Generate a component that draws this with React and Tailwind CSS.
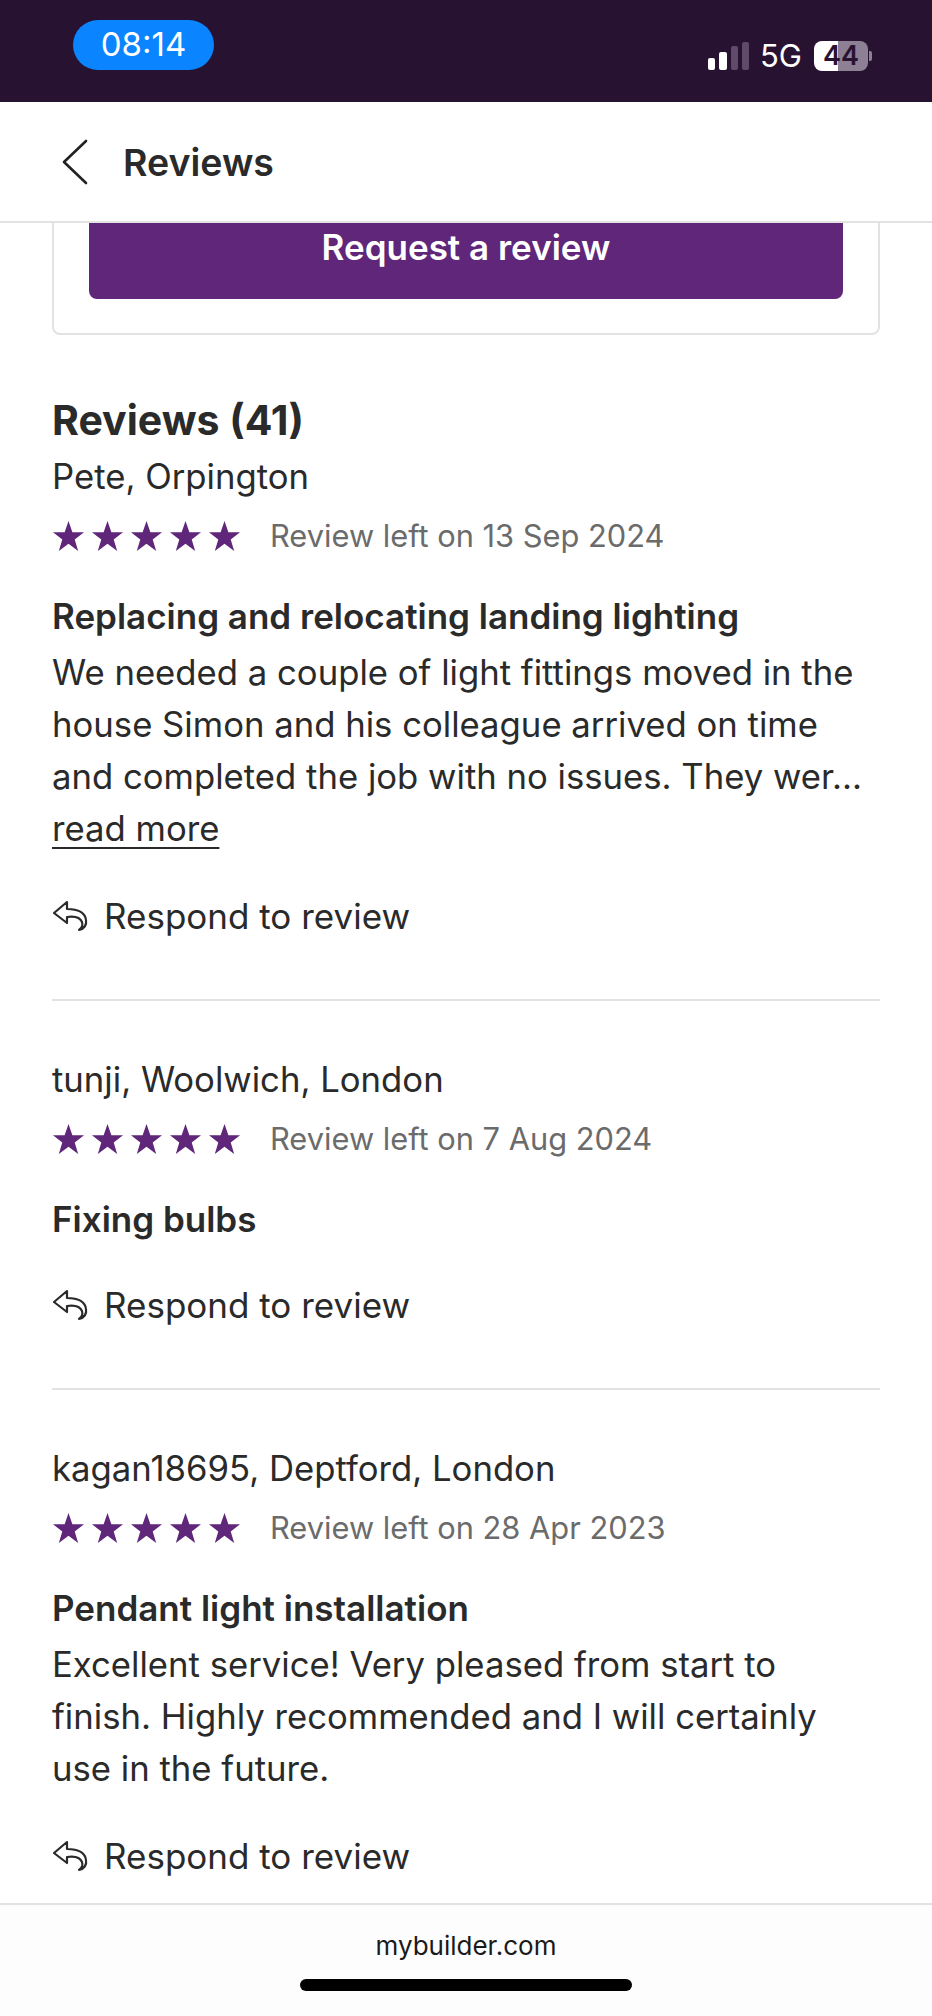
import React from 'react';

const reviews = [
  {
    name: 'Pete, Orpington',
    date: '13 Sep 2024',
    title: 'Replacing and relocating landing lighting',
    lines: [
      'We needed a couple of light fittings moved in the',
      'house Simon and his colleague arrived on time',
      'and completed the job with no issues. They wer...',
    ],
    more: true,
  },
  { name: 'tunji, Woolwich, London', date: '7 Aug 2024', title: 'Fixing bulbs', lines: [] },
  {
    name: 'kagan18695, Deptford, London',
    date: '28 Apr 2023',
    title: 'Pendant light installation',
    lines: [
      'Excellent service! Very pleased from start to',
      'finish. Highly recommended and I will certainly',
      'use in the future.',
    ],
  },
];

const Star = () => (
  <svg width="33" height="32" viewBox="0 0 34 33" className="shrink-0">
    <polygon points="17,1 21,12.6 33,12.6 23.4,20 27,32 17,24.6 7,32 10.6,20 1,12.6 13,12.6" fill="#5f2679" />
  </svg>
);

const ReplyIcon = () => (
  <svg width="36" height="32" viewBox="0 0 36 32" fill="none" stroke="#2a2a2a" strokeWidth="2.2" strokeLinejoin="round" strokeLinecap="round" className="shrink-0">
    <path d="M15 2 L2 13 L15 23 V17 C22 16 28 17 30 22 C31 25 30 28 27 30 C32 29 35 25 34 20 C33 12 25 9 15 9 Z" />
  </svg>
);

const Review = ({ review, last }) => (
  <div className={last ? '' : 'border-b-2 border-[#e2e2e2] pb-[57px] mb-[52px]'}>
    <p className="leading-[52px]">{review.name}</p>
    <div className="mt-[12px] flex h-[44px] items-center">
      <div className="flex gap-[6px]">
        <Star />
        <Star />
        <Star />
        <Star />
        <Star />
      </div>
      <span className="ml-[29px] text-[30.8px] text-[#6b6b6b]">Review left on {review.date}</span>
    </div>
    <p className="mt-[32px] text-[35px] font-semibold leading-[52px]">{review.title}</p>
    {review.lines.length > 0 && (
      <div className="mt-[4px]">
        {review.lines.map((line) => (
          <p key={line} className="leading-[52px] whitespace-nowrap">{line}</p>
        ))}
      </div>
    )}
    {review.more && <a className="block leading-[52px] underline underline-offset-[6px] decoration-2">read more</a>}
    <div className={`${review.lines.length > 0 ? 'mt-[36px]' : 'mt-[34px]'} flex h-[52px] items-center gap-[16px]`}>
      <ReplyIcon />
      <span className="text-[35px]">Respond to review</span>
    </div>
  </div>
);

export default function App() {
  return (
    <div className="flex h-[2016px] w-[932px] flex-col overflow-hidden bg-white font-['Inter',sans-serif] text-[34.7px] text-[#2a2a2a]">
      {/* status bar */}
      <div className="flex h-[102px] shrink-0 items-start justify-between bg-[#281232] pl-[73px] pr-[60px]">
        <div className="mt-[20px] flex h-[50px] w-[141px] items-center justify-center rounded-[25px] bg-[#0a84ff] text-[33px] text-white">08:14</div>
        <div className="mt-[33px] flex items-center">
          <div className="flex items-end gap-[4px]">
            <div className="h-[12px] w-[7px] rounded-[2px] bg-white" />
            <div className="h-[18px] w-[8px] rounded-[2px] bg-white" />
            <div className="h-[24px] w-[7px] rounded-[2px] bg-[#5f4a69]" />
            <div className="h-[28px] w-[7px] rounded-[2px] bg-[#5f4a69]" />
          </div>
          <span className="ml-[11px] text-[31px] text-white">5G</span>
          <div className="ml-[12px] flex h-[30px] w-[54px] items-center justify-center rounded-[8px] bg-[linear-gradient(90deg,#ffffff_0%,#ffffff_44%,#8d7f94_44%,#8d7f94_100%)] text-[27px] font-semibold text-[#281232]">44</div>
          <div className="ml-[1px] h-[10px] w-[3px] rounded-r-[2px] bg-[#8d7f94]" />
        </div>
      </div>

      {/* header */}
      <div className="flex h-[121px] shrink-0 items-center border-b-2 border-[#e2e2e2] bg-white pl-[61px]">
        <svg width="28" height="46" viewBox="0 0 28 46" fill="none" stroke="#222" strokeWidth="2.6" strokeLinecap="round" strokeLinejoin="round" className="mt-[1px]">
          <path d="M25 2 L3 23 L25 44" />
        </svg>
        <span className="ml-[34px] mt-[4px] text-[37.5px] font-semibold">Reviews</span>
      </div>

      {/* scrolled content */}
      <div className="min-h-0 flex-1 overflow-hidden px-[52px]">
        <div className="-mt-[42px] rounded-b-[8px] border-2 border-[#e2e2e2] px-[35px] pb-[34px] pt-[40px]">
          <div className="flex h-[76px] items-start justify-center rounded-b-[8px] bg-[#5f2679] text-[35px] font-semibold leading-[48px] text-white">
            Request a review
          </div>
        </div>
        <h2 className="mb-[4px] mt-[59px] text-[41px] font-bold leading-[52px]">Reviews (41)</h2>
        {reviews.map((review, i) => (
          <Review key={review.name} review={review} last={i === reviews.length - 1} />
        ))}
      </div>

      {/* browser bar */}
      <div className="flex h-[113px] shrink-0 flex-col items-center border-t-2 border-[#e2e2e2] bg-[#fdfdfe]">
        <span className="mt-[23px] text-[26px] leading-[36px] text-[#1a1a1a]">mybuilder.com</span>
        <div className="mt-[15px] h-[12px] w-[332px] rounded-full bg-black" />
      </div>
    </div>
  );
}
